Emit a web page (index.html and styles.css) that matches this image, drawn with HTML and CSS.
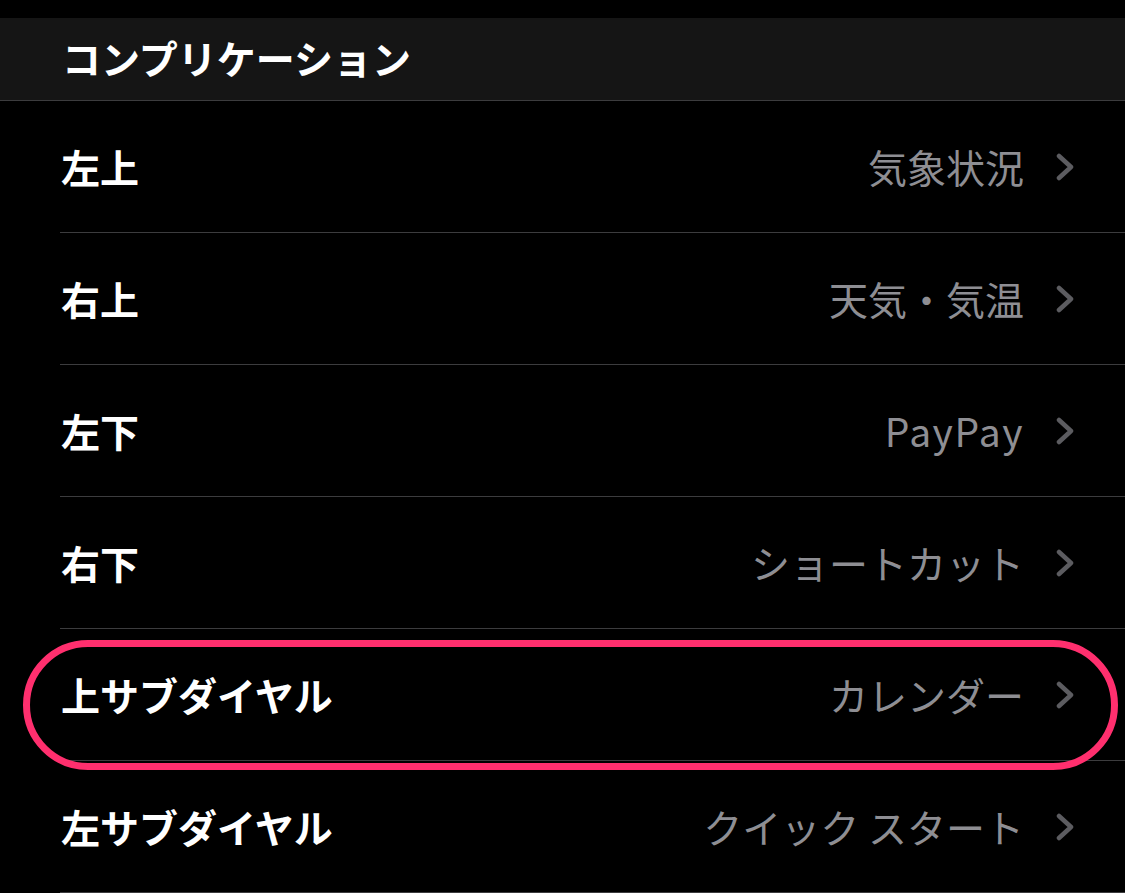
FILE: index.html
```html
<!DOCTYPE html>
<html lang="ja">
<head>
    <meta charset="UTF-8">
    <title>コンプリケーション</title>
    <link rel="stylesheet" href="styles.css">
</head>
<body>
    <div id="screen">
        <div class="header">コンプリケーション</div>
        <ul class="list">
            <li class="row">
                <span class="label">左上</span><span class="value">気象状況</span>
                <svg class="chev" viewBox="0 0 18 28"><polyline points="3,3 15,14 3,25"/></svg>
            </li>
            <li class="row">
                <span class="label">右上</span><span class="value">天気・気温</span>
                <svg class="chev" viewBox="0 0 18 28"><polyline points="3,3 15,14 3,25"/></svg>
            </li>
            <li class="row">
                <span class="label">左下</span><span class="value latin">PayPay</span>
                <svg class="chev" viewBox="0 0 18 28"><polyline points="3,3 15,14 3,25"/></svg>
            </li>
            <li class="row">
                <span class="label">右下</span><span class="value">ショートカット</span>
                <svg class="chev" viewBox="0 0 18 28"><polyline points="3,3 15,14 3,25"/></svg>
            </li>
            <li class="row marked">
                <span class="label">上サブダイヤル</span><span class="value">カレンダー</span>
                <svg class="chev" viewBox="0 0 18 28"><polyline points="3,3 15,14 3,25"/></svg>
            </li>
            <li class="row">
                <span class="label">左サブダイヤル</span><span class="value">クイック スタート</span>
                <svg class="chev" viewBox="0 0 18 28"><polyline points="3,3 15,14 3,25"/></svg>
            </li>
        </ul>
    </div>
</body>
</html>
```

FILE: styles.css
```css
*{
    margin: 0;
    padding: 0;
    list-style: none;
    box-sizing: border-box;
}
body{
    background: #000;
    font-family: "Noto Sans CJK JP", "Noto Sans", sans-serif;
    overflow: hidden;
}
#screen{
    width: 1125px;
    height: 893px;
    padding-top: 18px;
}
.header{
    height: 83px;
    background: #151515;
    border-bottom: 1px solid #3c3c3e;
    color: #fff;
    font-size: 39px;
    font-weight: 700;
    padding-left: 62px;
    line-height: 78px;
}
.list{
    padding-left: 60px;
}
.row{
    position: relative;
    height: 132px;
    display: flex;
    align-items: center;
    border-bottom: 1px solid #3c3c3e;
    padding-right: 51px;
}
.label{
    flex: 1;
    color: #fff;
    font-size: 39px;
    font-weight: 700;
    padding-left: 1px;
    padding-bottom: 2px;
}
.value{
    color: #8e8e93;
    font-size: 39px;
    font-weight: 400;
    padding-bottom: 2px;
}
.latin{
    letter-spacing: 1.5px;
}
.chev{
    width: 18px;
    height: 28px;
    margin-left: 32px;
    fill: none;
    stroke: #5c5c60;
    stroke-width: 4.5;
    stroke-linecap: round;
    stroke-linejoin: round;
}
.marked::after{
    content: "";
    position: absolute;
    box-sizing: border-box;
    left: -37px;
    right: 7px;
    top: 11px;
    height: 130px;
    border: 7px solid #ff2f6e;
    border-radius: 65px;
}
```
